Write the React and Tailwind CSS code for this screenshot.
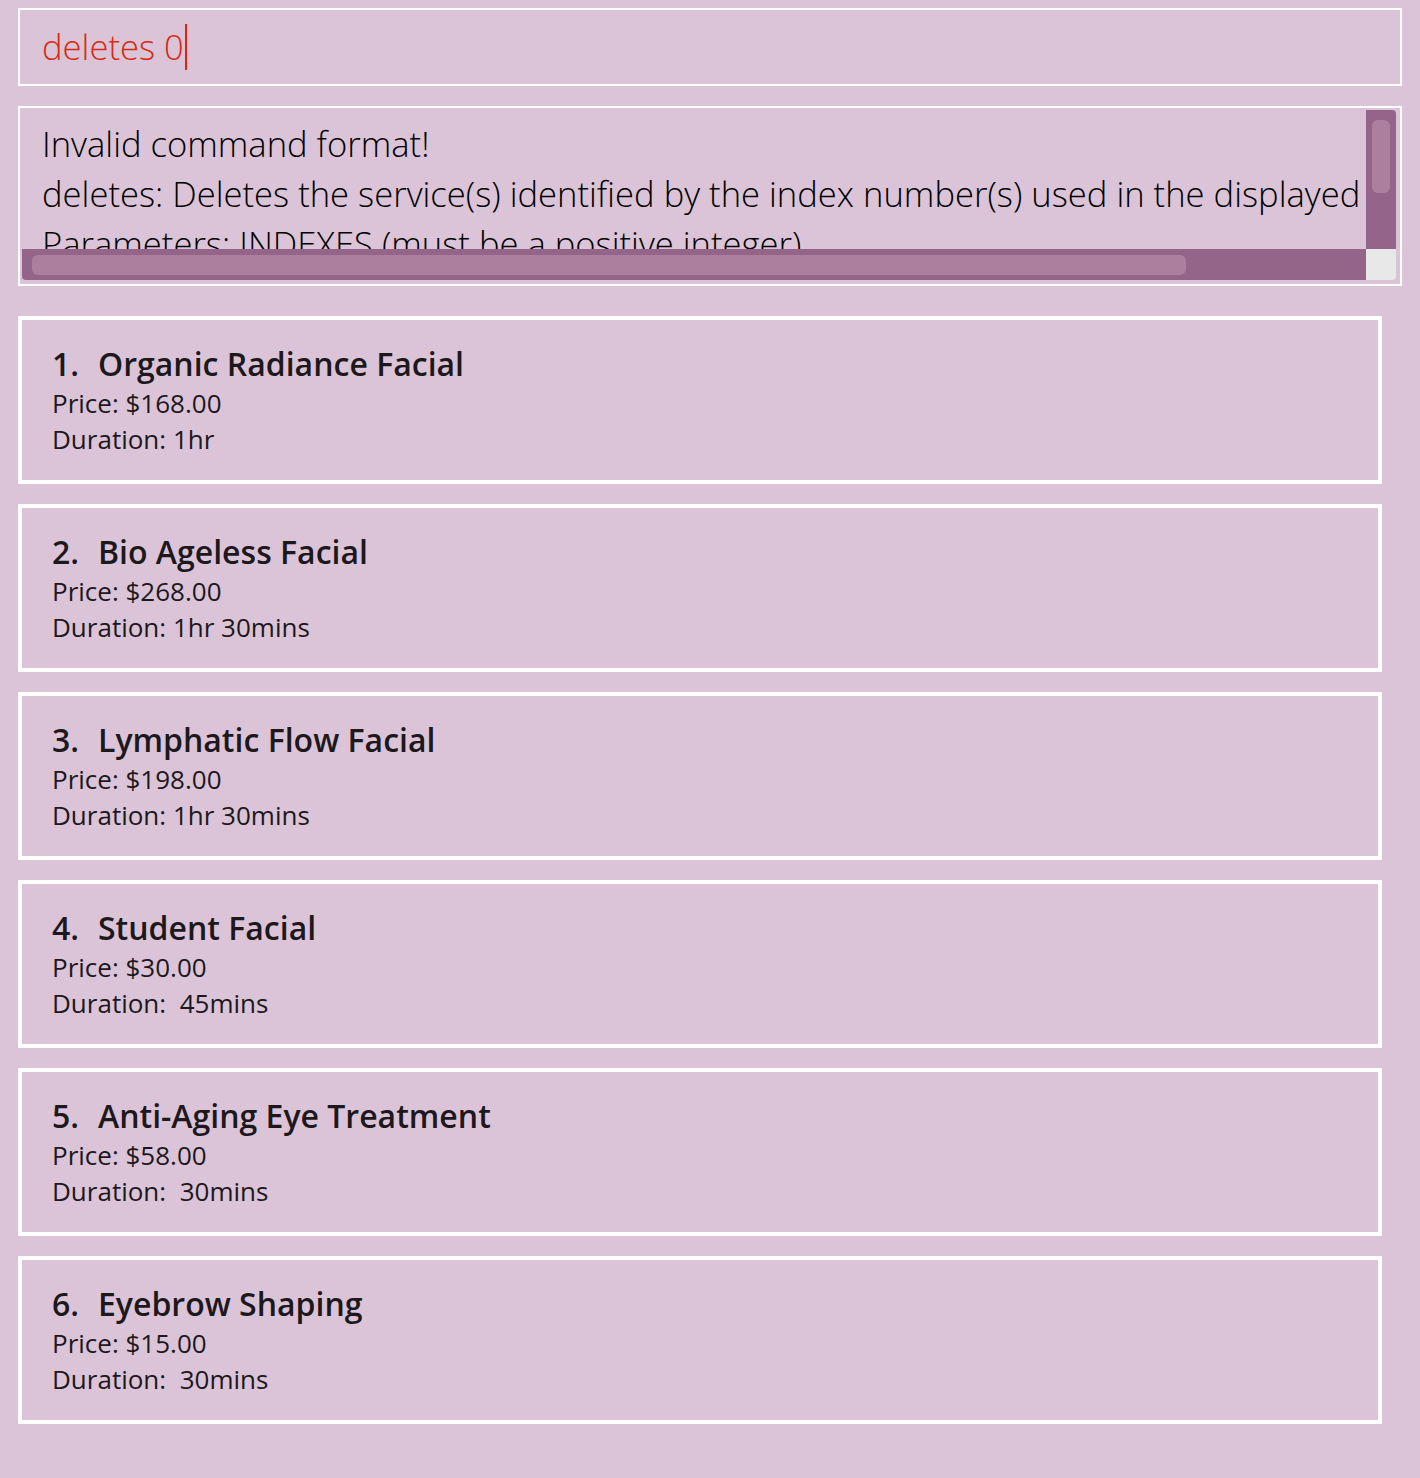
const services = [
  { name: 'Organic Radiance Facial', price: '$168.00', duration: '1hr' },
  { name: 'Bio Ageless Facial', price: '$268.00', duration: '1hr 30mins' },
  { name: 'Lymphatic Flow Facial', price: '$198.00', duration: '1hr 30mins' },
  { name: 'Student Facial', price: '$30.00', duration: ' 45mins' },
  { name: 'Anti-Aging Eye Treatment', price: '$58.00', duration: ' 30mins' },
  { name: 'Eyebrow Shaping', price: '$15.00', duration: ' 30mins' },
];

function ServiceCard({ service, index }) {
  return (
    <div className="h-[168px] border-4 border-white pl-[30px] pt-[23px] text-[#1c181c]">
      <div className="flex text-[32px] font-semibold leading-[42px]">
        <span className="w-[46px]">{index + 1}.</span>
        <span>{service.name}</span>
      </div>
      <div className="text-[26px] leading-[36px]">Price: {service.price}</div>
      <div className="text-[26px] leading-[36px] whitespace-pre">Duration: {service.duration}</div>
    </div>
  );
}

export default function App() {
  return (
    <div
      className="min-h-[1478px] bg-[#dbc4d7] pt-[8px] px-[18px] pb-[40px]"
      style={{ fontFamily: '"Open Sans", "Noto Sans", sans-serif' }}
    >
      {/* Command box */}
      <div className="h-[78px] border-2 border-white flex items-center pl-[22px]">
        <span className="text-[34.6px] font-light text-[#d8290e] leading-none">deletes 0</span>
        <span className="w-[2px] h-[46px] bg-[#d8290e] ml-[1px]" />
      </div>

      {/* Result box */}
      <div className="mt-[20px] h-[180px] border-2 border-white pl-[2px] pt-[2px] pr-[4px] pb-[4px]">
        <div className="grid grid-cols-[1fr_30px] grid-rows-[139px_31px] h-full">
          <div className="overflow-hidden pl-[20px] pt-[9px] text-[34.6px] font-light leading-[50px] text-black whitespace-nowrap">
            <div>Invalid command format!</div>
            <div>deletes: Deletes the service(s) identified by the index number(s) used in the displayed service list.</div>
            <div>Parameters: INDEXES (must be a positive integer)</div>
          </div>
          <div className="bg-[#946489] rounded-tr-[4px] px-[6px] pt-[10px]">
            <div className="h-[73px] rounded-[6px] bg-[#ad7f9f]" />
          </div>
          <div className="bg-[#946489] rounded-bl-[4px] pl-[10px] py-[6px]">
            <div className="h-[20px] w-[1154px] rounded-[6px] bg-[#ad7f9f]" />
          </div>
          <div className="bg-[#e8e8e8] rounded-br-[4px]" />
        </div>
      </div>

      {/* Service list */}
      <div className="mt-[30px] w-[1364px] flex flex-col gap-[20px]">
        {services.map((s, i) => (
          <ServiceCard key={s.name} service={s} index={i} />
        ))}
      </div>
    </div>
  );
}
